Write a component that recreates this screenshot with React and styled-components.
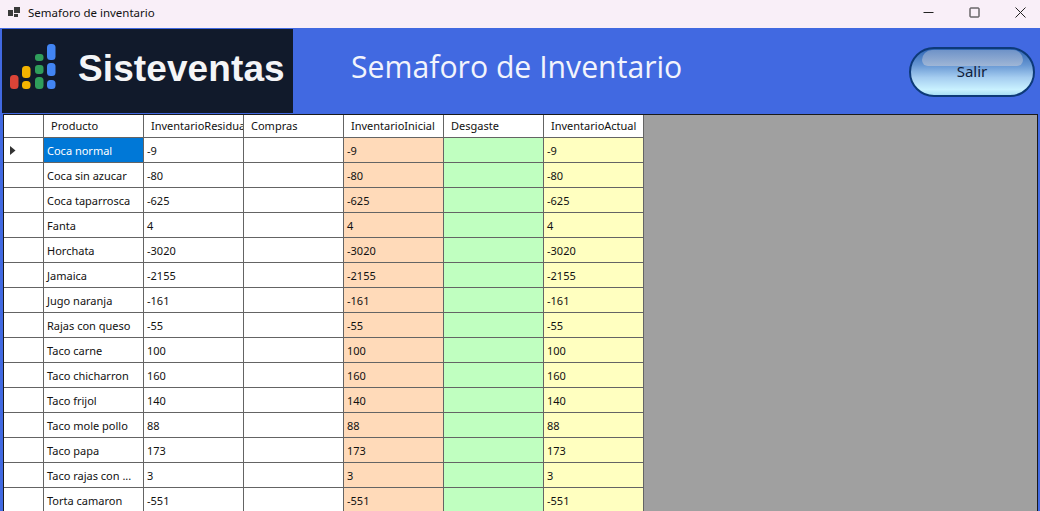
import React from 'react'
import styled, { createGlobalStyle } from 'styled-components'

const GlobalStyle = createGlobalStyle`
  html, body {
    margin: 0;
    padding: 0;
    height: 100%;
    overflow: hidden;
    background: #4169e1;
  }
`

const Window = styled.div`
  width: 1040px;
  height: 511px;
  display: flex;
  flex-direction: column;
  overflow: hidden;
  background: #4169e1;
  font-family: 'Noto Sans', 'Open Sans', sans-serif;
`

const TitleBar = styled.div`
  height: 28px;
  flex: none;
  display: flex;
  align-items: center;
  padding-bottom: 3px;
  box-sizing: border-box;
  background: #f9eff8;
  color: #111;
  font-size: 11.5px;
`

const AppIcon = styled.svg`
  width: 12px;
  height: 12px;
  margin-left: 8px;
  margin-right: 8px;
`

const WindowTitle = styled.span`
  flex: 1;
`

const WindowButton = styled.div`
  width: 46px;
  height: 25px;
  display: flex;
  align-items: center;
  justify-content: center;
  position: relative;
  left: 3px;
`

const Header = styled.div`
  height: 85px;
  flex: none;
  display: flex;
  align-items: stretch;
  padding-left: 2px;
  padding-top: 1px;
  box-sizing: border-box;
`

const LogoBox = styled.div`
  width: 291px;
  background: #111a2b;
  display: flex;
  align-items: center;
  flex: none;
`

const LogoMark = styled.svg`
  width: 46px;
  height: 46px;
  margin-left: 8px;
  margin-bottom: 9px;
  flex: none;
`

const LogoText = styled.span`
  margin-left: 22px;
  margin-bottom: 5px;
  color: #f4f5f7;
  font-family: 'Liberation Sans', Arial, sans-serif;
  font-weight: 700;
  font-size: 37px;
  letter-spacing: 0.1px;
`

const PageTitle = styled.h1`
  margin: 0 0 0 58px;
  flex: 1;
  align-self: center;
  color: #f2f4fc;
  font-family: 'Open Sans', sans-serif;
  font-weight: 400;
  font-size: 30.2px;
  line-height: 1;
  position: relative;
  top: -4px;
`

const GlossButton = styled.button`
  position: relative;
  width: 126px;
  height: 50px;
  margin: 18px 5px 0 0;
  padding: 0;
  flex: none;
  border-radius: 25px;
  border: 2px solid #0d3a78;
  background: linear-gradient(#2f66b4 0%, #6797d3 35%, #a5cdf0 62%, #c9f1ff 88%, #a9dff5 100%);
  color: #10203a;
  font-family: 'Noto Sans', sans-serif;
  font-size: 15px;
  box-sizing: border-box;
`

const GlossShine = styled.span`
  position: absolute;
  left: 11px;
  right: 10px;
  top: 1px;
  height: 16px;
  border-radius: 10px 10px 6px 6px;
  background: linear-gradient(#6f93c8, #9fb6d6);
`

const GlossLabel = styled.span`
  position: relative;
  top: -1px;
`

const GridArea = styled.div`
  margin: 1px 2px 0 3px;
  flex: 1;
  min-height: 0;
  background: #a0a0a0;
  border: 1px solid #1a1a1a;
  border-bottom: none;
  overflow: hidden;
`

const Table = styled.table`
  border-collapse: separate;
  border-spacing: 0;
  table-layout: fixed;
  width: 640px;
  background: #fff;
  font-size: 11px;
  color: #111;
`

const HeaderCell = styled.th`
  height: 23px;
  padding: 0 0 2px 7px;
  box-sizing: border-box;
  text-align: left;
  font-weight: 400;
  white-space: nowrap;
  overflow: hidden;
  background: #fff;
  border-right: 1px solid #646464;
  border-bottom: 1px solid #646464;
`

const Cell = styled.td`
  height: 25px;
  padding: 0 0 0 3px;
  box-sizing: border-box;
  white-space: nowrap;
  overflow: hidden;
  background: ${(props) => props.$bg || '#fff'};
  color: ${(props) => props.$color || '#111'};
  border-right: 1px solid #646464;
  border-bottom: 1px solid #646464;
`

const RowHeader = styled(Cell)`
  padding: 0;
`

const RowArrow = styled.svg`
  display: block;
  margin-left: 6px;
  width: 6px;
  height: 9px;
`

const columns = ['Producto', 'InventarioResidual', 'Compras', 'InventarioInicial', 'Desgaste', 'InventarioActual']

const rows = [
  ['Coca normal', '-9'],
  ['Coca sin azucar', '-80'],
  ['Coca taparrosca', '-625'],
  ['Fanta', '4'],
  ['Horchata', '-3020'],
  ['Jamaica', '-2155'],
  ['Jugo naranja', '-161'],
  ['Rajas con queso', '-55'],
  ['Taco carne', '100'],
  ['Taco chicharron', '160'],
  ['Taco frijol', '140'],
  ['Taco mole pollo', '88'],
  ['Taco papa', '173'],
  ['Taco rajas con ...', '3'],
  ['Torta camaron', '-551']
]

const logoBars = [
  [0, 31, 14, '#db4437', 3.5],
  [12, 22, 12, '#f4b400', 3.5],
  [12, 37, 8, '#f4b400', 3.5],
  [25, 10, 7, '#2f9e5b', 3],
  [25, 21, 9, '#2f9e5b', 3],
  [25, 33, 12, '#2f9e5b', 3.5],
  [37, 0, 16, '#4285f4', 3.5],
  [37, 19, 13, '#4285f4', 3.5],
  [37, 36, 9, '#4285f4', 3.5]
]

function App() {
  return (
    <Window>
      <GlobalStyle />
      <TitleBar>
        <AppIcon viewBox="0 0 12 12">
          <rect x="0" y="3" width="5" height="6" fill="#3a3a3a" />
          <rect x="6" y="0" width="6" height="6" fill="#3a3a3a" />
          <rect x="6" y="7" width="4" height="3" fill="#3a3a3a" />
        </AppIcon>
        <WindowTitle>Semaforo de inventario</WindowTitle>
        <WindowButton>
          <svg width="11" height="11" viewBox="0 0 11 11">
            <path d="M0.5 5.5H10.5" stroke="#222" strokeWidth="1" fill="none" />
          </svg>
        </WindowButton>
        <WindowButton>
          <svg width="11" height="11" viewBox="0 0 11 11">
            <rect x="1" y="1" width="9" height="9" rx="0.5" stroke="#222" strokeWidth="1" fill="none" />
          </svg>
        </WindowButton>
        <WindowButton>
          <svg width="11" height="11" viewBox="0 0 11 11">
            <path d="M0.5 0.5L10.5 10.5M10.5 0.5L0.5 10.5" stroke="#222" strokeWidth="1" fill="none" />
          </svg>
        </WindowButton>
      </TitleBar>
      <Header>
        <LogoBox>
          <LogoMark viewBox="0 0 46 46">
            {logoBars.map(([x, y, h, fill, r]) => (
              <rect key={`${x}-${y}`} x={x} y={y} width="8.5" height={h} rx={r} fill={fill} />
            ))}
          </LogoMark>
          <LogoText>Sisteventas</LogoText>
        </LogoBox>
        <PageTitle>Semaforo de Inventario</PageTitle>
        <GlossButton>
          <GlossShine />
          <GlossLabel>Salir</GlossLabel>
        </GlossButton>
      </Header>
      <GridArea>
        <Table>
          <colgroup>
            <col style={{ width: 40 }} />
            {columns.map((c) => (
              <col key={c} style={{ width: 100 }} />
            ))}
          </colgroup>
          <thead>
            <tr>
              <HeaderCell />
              {columns.map((c) => (
                <HeaderCell key={c}>{c}</HeaderCell>
              ))}
            </tr>
          </thead>
          <tbody>
            {rows.map(([name, qty], i) => (
              <tr key={name}>
                <RowHeader>
                  {i === 0 && (
                    <RowArrow viewBox="0 0 6 9">
                      <path d="M0 0L5.5 4.5L0 9Z" fill="#333" />
                    </RowArrow>
                  )}
                </RowHeader>
                <Cell $bg={i === 0 ? '#0078d7' : undefined} $color={i === 0 ? '#fff' : undefined}>
                  {name}
                </Cell>
                <Cell>{qty}</Cell>
                <Cell />
                <Cell $bg="#ffdab9">{qty}</Cell>
                <Cell $bg="#c0ffc0" />
                <Cell $bg="#ffffc0">{qty}</Cell>
              </tr>
            ))}
          </tbody>
        </Table>
      </GridArea>
    </Window>
  )
}

export default App
